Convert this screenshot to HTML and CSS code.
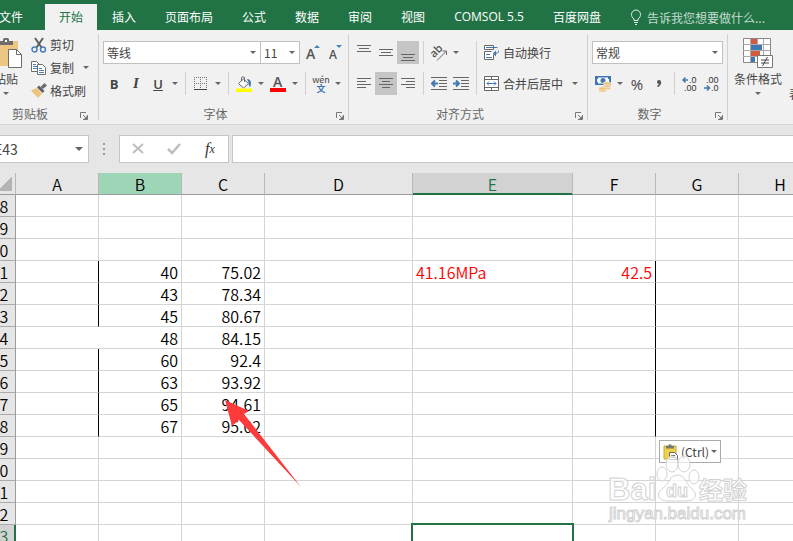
FILE: index.html
```html
<!DOCTYPE html>
<html lang="zh-CN">
<head>
    <meta charset="UTF-8">
    <meta name="viewport" content="width=device-width, initial-scale=1.0">
    <title>Excel</title>
    <link rel="stylesheet" href="styles.css">
</head>
<body>
    <div class="app">
        <!-- Ribbon tabs -->
        <nav class="tabs">
            <button class="tab file">文件</button>
            <button class="tab active">开始</button>
            <button class="tab">插入</button>
            <button class="tab">页面布局</button>
            <button class="tab">公式</button>
            <button class="tab">数据</button>
            <button class="tab">审阅</button>
            <button class="tab">视图</button>
            <button class="tab latin">COMSOL 5.5</button>
            <button class="tab">百度网盘</button>
            <label class="tell-me">
                <svg width="12" height="16" viewBox="0 0 12 16" fill="none" stroke="#e3efe8"><path d="M4 11.500V10C2 8.500 1.500 7 1.500 5.500a4.500 4.500 0 0 1 9 0C10.500 7 10 8.500 8 10v1.500zM4 13.500h4M5 15.500h2"/></svg>
                <input type="text" placeholder="告诉我您想要做什么..." aria-label="告诉我您想要做什么">
            </label>
        </nav>

        <div class="ribbon">
            <!-- Clipboard -->
            <section class="group first">
                <div class="group-body clipboard">
                    <button class="big-btn paste">
                        <svg width="32" height="32" viewBox="0 0 32 32"><path d="M2 3h26v25H2z" fill="#edc683"/><path d="M9 7V3h4V1.500q0-1.500 1.500-1.500h3Q19 0 19 1.500V3h4v4z" fill="#6d6d6d"/><path d="M15 2h2v2h-2z" fill="#fff"/><path d="M18.500 11.500h8l5 5v13h-13z" fill="#fff" stroke="#6d6d6d"/><path d="M26.500 11.500v5h5" fill="none" stroke="#6d6d6d"/></svg>
                        <span>粘贴</span>
                        <i class="arrow"></i>
                    </button>
                    <div class="stack">
                        <button class="text-btn">
                            <svg width="16" height="16" viewBox="0 0 16 16" fill="none"><path d="M4 1l6.500 9.500M12 1L5.500 10.500" stroke="#5f5f5f" stroke-width="2"/><circle cx="3.500" cy="12.500" r="2.500" stroke="#4a7fb8" stroke-width="1.400"/><circle cx="12" cy="12.500" r="2.500" stroke="#4a7fb8" stroke-width="1.400"/></svg>
                            剪切
                        </button>
                        <button class="text-btn">
                            <svg width="16" height="16" viewBox="0 0 16 16" fill="#fff" stroke="#6d6d6d"><path d="M.5 1.500h5l3 3v7h-8z"/><path d="M2 4.500h3M2 6.500h4M2 8.500h4" stroke="#4a7fb8"/><path d="M6.500 4.500h5l3 3v7h-8z"/><path d="M8 8.500h3M8 10.500h5M8 12.500h5" stroke="#4a7fb8"/></svg>
                            复制 <i class="arrow"></i>
                        </button>
                        <button class="text-btn">
                            <svg width="16" height="16" viewBox="0 0 16 16"><path d="M13.500 0L16 2.500 12 6 9.500 4z" fill="#6d6d6d"/><path d="M8 2.500L13.500 8l-2 2L6 4.500z" fill="#5f5f5f"/><path d="M5.500 5l5.500 5.500L7 15 0 7.500z" fill="#edc27b"/></svg>
                            格式刷
                        </button>
                    </div>
                </div>
                <div class="group-label"><span>剪贴板</span><button class="launcher" aria-label="剪贴板设置"><svg width="8" height="8" viewBox="0 0 8 8"><path d="M.5 6V.500H6" fill="none" stroke="#777"/><path d="M3 3l3 3M7.500 3v4.500H3" fill="none" stroke="#777"/><path d="M4 7l3-3v3z" fill="#777"/></svg></button></div>
            </section>

            <!-- Font -->
            <section class="group">
                <div class="group-body font">
                    <div class="row">
                        <div class="select font-name"><select aria-label="字体"><option>等线</option></select></div>
                        <div class="select font-size"><select aria-label="字号"><option>11</option></select></div>
                        <button class="icon-btn grow-font" aria-label="增大字号"><svg width="16" height="18" viewBox="0 0 16 18"><text x="1" y="15" font-size="14" class="glyph">A</text><path d="M9 4l3-3 3 3z" fill="#4a7fb8"/></svg></button>
                        <button class="icon-btn" aria-label="减小字号"><svg width="16" height="18" viewBox="0 0 16 18"><text x="2" y="15" font-size="12" class="glyph">A</text><path d="M9 1h6l-3 3z" fill="#4a7fb8"/></svg></button>
                    </div>
                    <div class="row">
                        <button class="icon-btn bold">B</button>
                        <button class="icon-btn italic">I</button>
                        <button class="icon-btn underline">U</button>
                        <button class="drop" aria-label="下划线"><i class="arrow"></i></button>
                        <span class="sep"></span>
                        <button class="icon-btn" aria-label="边框"><svg width="14" height="14" viewBox="0 0 14 14" fill="none" stroke="#777"><path d="M0 .5h13M0 6.500h13M.5 0v12M6.500 0v12M12.500 0v12" stroke-dasharray="1 1"/><path d="M0 12.500h13" stroke="#444"/></svg></button>
                        <button class="drop" aria-label="边框选项"><i class="arrow"></i></button>
                        <span class="sep"></span>
                        <button class="icon-btn" aria-label="填充颜色"><svg width="16" height="16" viewBox="0 0 16 16"><path d="M2.500 7.500l5-4.500 5 4.500-5 4.500z" fill="#fff" stroke="#666"/><path d="M5.500 5V1.500Q7 0 8.500 1.500V6" fill="none" stroke="#666"/><path d="M11 3q4 0 4 4.500 0 3-1.500 3.500-1-3-1-4.500z" fill="#3f77b4"/><path d="M0 12.500h16V16H0z" fill="#ff0"/></svg></button>
                        <button class="drop" aria-label="填充颜色选项"><i class="arrow"></i></button>
                        <button class="icon-btn" aria-label="字体颜色"><svg width="16" height="16" viewBox="0 0 16 16"><text x="3" y="11" font-size="14" class="glyph">A</text><path d="M0 12h16v4H0z" fill="#f00"/></svg></button>
                        <button class="drop" aria-label="字体颜色选项"><i class="arrow"></i></button>
                        <span class="sep"></span>
                        <button class="icon-btn pinyin"><span>wén</span><b>文</b></button>
                        <button class="drop" aria-label="拼音选项"><i class="arrow"></i></button>
                    </div>
                </div>
                <div class="group-label"><span>字体</span><button class="launcher" aria-label="字体设置"><svg width="8" height="8" viewBox="0 0 8 8"><path d="M.5 6V.500H6" fill="none" stroke="#777"/><path d="M3 3l3 3M7.500 3v4.500H3" fill="none" stroke="#777"/><path d="M4 7l3-3v3z" fill="#777"/></svg></button></div>
            </section>

            <!-- Alignment -->
            <section class="group">
                <div class="group-body columns">
                    <div class="lines">
                        <div class="row">
                            <button class="icon-btn" aria-label="顶端对齐"><svg width="14" height="16" viewBox="0 0 14 16" stroke="#666"><path d="M0 .5h14M2 3.500h10M0 6.500h14"/></svg></button>
                            <button class="icon-btn" aria-label="垂直居中"><svg width="14" height="16" viewBox="0 0 14 16" stroke="#666"><path d="M0 4.500h14M2 7.500h10M0 10.500h14"/></svg></button>
                            <button class="icon-btn on" aria-label="底端对齐"><svg width="14" height="16" viewBox="0 0 14 16" stroke="#666"><path d="M0 9.500h14M2 12.500h10M0 15.500h14"/></svg></button>
                            <span class="sep"></span>
                            <button class="icon-btn" aria-label="方向"><svg width="18" height="18" viewBox="0 0 18 18"><text x="0" y="11" font-size="11" class="glyph" transform="rotate(-45 6 8)">ab</text><path d="M7 16.500l9-9M16.500 11V7h-4" fill="none" stroke="#666"/></svg></button>
                            <button class="drop" aria-label="方向选项"><i class="arrow"></i></button>
                        </div>
                        <div class="row">
                            <button class="icon-btn" aria-label="左对齐"><svg width="14" height="14" viewBox="0 0 14 14" stroke="#666"><path d="M0 1.500h14M0 4.500h9M0 7.500h14M0 10.500h9"/></svg></button>
                            <button class="icon-btn on" aria-label="居中"><svg width="14" height="14" viewBox="0 0 14 14" stroke="#666"><path d="M0 1.500h14M3 4.500h8M0 7.500h14M3 10.500h8"/></svg></button>
                            <button class="icon-btn" aria-label="右对齐"><svg width="14" height="14" viewBox="0 0 14 14" stroke="#666"><path d="M0 1.500h14M5 4.500h9M0 7.500h14M5 10.500h9"/></svg></button>
                            <span class="sep"></span>
                            <button class="icon-btn" aria-label="减少缩进"><svg width="16" height="14" viewBox="0 0 16 14" fill="none" stroke="#666"><path d="M0 .5h16M8 3.500h8M8 6.500h8M8 9.500h8M0 12.500h16"/><path d="M7 6.500H1M4 3.500l-3 3 3 3" stroke="#3f77b4" stroke-width="2"/></svg></button>
                            <button class="icon-btn" aria-label="增加缩进"><svg width="16" height="14" viewBox="0 0 16 14" fill="none" stroke="#666"><path d="M0 .5h16M8 3.500h8M8 6.500h8M8 9.500h8M0 12.500h16"/><path d="M0 6.500h6M3 3.500l3 3-3 3" stroke="#3f77b4" stroke-width="2"/></svg></button>
                        </div>
                    </div>
                    <span class="sep tall"></span>
                    <div class="lines">
                        <button class="text-btn"><svg width="16" height="16" viewBox="0 0 16 16" fill="none" stroke="#666"><path d="M.5 .5h9v4h-9zM9.500 9.500v5h-9v-8h7" fill="#fff"/><path d="M2 2.500h11.500M2 9.500h4M2 12.500h6M14.500 5.500v1q0 2-3.500 2" stroke="#3f77b4"/><path d="M12 5.500L9 8.500l3 3z" fill="#3f77b4" stroke="none"/></svg>自动换行</button>
                        <button class="text-btn"><svg width="16" height="16" viewBox="0 0 16 16" fill="#fff" stroke="#666"><path d="M.5 .5h14v14H.5zM.5 3.500h14M.5 11.500h14M7.500 .5v3M7.500 11.500v3"/><path d="M3 7.500h9M5 5.500l-2 2 2 2M10 5.500l2 2-2 2" fill="none" stroke="#3f77b4"/></svg>合并后居中 <i class="arrow"></i></button>
                    </div>
                </div>
                <div class="group-label"><span>对齐方式</span><button class="launcher" aria-label="对齐设置"><svg width="8" height="8" viewBox="0 0 8 8"><path d="M.5 6V.500H6" fill="none" stroke="#777"/><path d="M3 3l3 3M7.500 3v4.500H3" fill="none" stroke="#777"/><path d="M4 7l3-3v3z" fill="#777"/></svg></button></div>
            </section>

            <!-- Number -->
            <section class="group">
                <div class="group-body">
                    <div class="row">
                        <div class="select number-format"><select aria-label="数字格式"><option>常规</option></select></div>
                    </div>
                    <div class="row">
                        <button class="icon-btn" aria-label="会计数字格式"><svg width="16" height="16" viewBox="0 0 16 16"><path d="M0 0h16v9H0z" fill="#3f77b4"/><path d="M2 1.500h12v6H2z" fill="#fff"/><circle cx="8" cy="4.500" r="2.500" fill="#3f77b4"/><path d="M1 1h2v2H1zM13 1h2v2h-2zM1 6h2v2H1z" fill="#3f77b4"/><g fill="#edc27b" stroke="#f1f1f1" stroke-width=".7"><ellipse cx="12" cy="12" rx="4" ry="1.700"/><ellipse cx="12" cy="10" rx="4" ry="1.700"/><ellipse cx="12" cy="7.500" rx="4" ry="1.700"/><ellipse cx="7.500" cy="14.500" rx="4" ry="1.700"/><ellipse cx="7.500" cy="12.500" rx="4" ry="1.700"/></g></svg></button>
                        <button class="drop" aria-label="货币选项"><i class="arrow"></i></button>
                        <button class="icon-btn percent">%</button>
                        <button class="icon-btn" aria-label="千位分隔样式"><svg width="8" height="14" viewBox="0 0 8 14"><circle cx="4" cy="5" r="2" fill="#555"/><path d="M5.500 5q0 3-3 4.500" fill="none" stroke="#555" stroke-width="1.500"/></svg></button>
                        <span class="sep"></span>
                        <button class="icon-btn" aria-label="增加小数位数"><svg width="16" height="16" viewBox="0 0 16 16"><text x="7" y="7" font-size="9" class="digits">.0</text><text x="2" y="15" font-size="9" class="digits">.00</text><path d="M6 4H1M3.500 1.500L1 4l2.500 2.500" fill="none" stroke="#3f77b4" stroke-width="1.500"/></svg></button>
                        <button class="icon-btn" aria-label="减少小数位数"><svg width="16" height="16" viewBox="0 0 16 16"><text x="2" y="7" font-size="9" class="digits">.00</text><text x="7" y="15" font-size="9" class="digits">.0</text><path d="M0 12h5M3 9.500L5.500 12 3 14.500" fill="none" stroke="#3f77b4" stroke-width="1.500"/></svg></button>
                    </div>
                </div>
                <div class="group-label"><span>数字</span><button class="launcher" aria-label="数字设置"><svg width="8" height="8" viewBox="0 0 8 8"><path d="M.5 6V.500H6" fill="none" stroke="#777"/><path d="M3 3l3 3M7.500 3v4.500H3" fill="none" stroke="#777"/><path d="M4 7l3-3v3z" fill="#777"/></svg></button></div>
            </section>

            <!-- Styles -->
            <section class="group styles">
                <div class="group-body clipboard">
                    <button class="big-btn">
                        <svg width="32" height="32" viewBox="0 0 32 32"><path d="M1.500 .5h27v24h-27z" fill="#fff" stroke="#888"/><path d="M1 6.500h27M1 12.500h27M1 18.500h27M8.500 1v23M15.500 1v23M21.500 1v23" stroke="#aaa"/><path d="M9 1h6v5H9zM9 13h9v5H9z" fill="#d65b3b"/><path d="M9 7h11v5H9zM9 19h4v5H9z" fill="#3f77b4"/><path d="M15.500 17.500h15v12h-15z" fill="#fff" stroke="#777"/><path d="M19 22h8M19 25h8M25.500 19l-5 9" stroke="#444"/></svg>
                        <span>条件格式</span>
                        <i class="arrow"></i>
                    </button>
                    <button class="big-btn">
                        <svg width="24" height="32" viewBox="0 0 24 32"><path d="M1.500 .5h22v24h-22z" fill="#fff" stroke="#888"/></svg>
                        <span>套用<br>表格格式</span>
                    </button>
                </div>
            </section>
        </div>

        <!-- Formula bar -->
        <div class="formula-bar">
            <div class="name-box"><input type="text" value="E43" aria-label="名称框"><i class="arrow"></i></div>
            <svg class="dots" width="2" height="12" viewBox="0 0 2 12" fill="#999"><path d="M0 0h2v2H0zM0 5h2v2H0zM0 10h2v2H0z"/></svg>
            <div class="fx-box">
                <button aria-label="取消"><svg width="12" height="12" viewBox="0 0 12 12" stroke="#bdbdbd" stroke-width="2"><path d="M1 1l10 9M11 1L1 10"/></svg></button>
                <button aria-label="输入"><svg width="14" height="12" viewBox="0 0 14 12" fill="none" stroke="#bdbdbd" stroke-width="2.500"><path d="M1 6l4 4 8-9"/></svg></button>
                <button class="fx" aria-label="插入函数">f<sub>x</sub></button>
            </div>
            <input type="text" class="formula-input" aria-label="编辑栏">
        </div>

        <!-- Worksheet -->
        <div class="sheet">
            <table>
                <colgroup>
                    <col class="col-head"><col class="col"><col class="col"><col class="col"><col class="col-d"><col class="col-e"><col class="col"><col class="col"><col class="col">
                </colgroup>
                <thead>
                    <tr><th class="corner"></th><th>A</th><th class="marked">B</th><th>C</th><th>D</th><th class="current">E</th><th>F</th><th>G</th><th>H</th></tr>
                </thead>
                <tbody>
                    <tr><th>28</th><td></td><td></td><td></td><td></td><td></td><td></td><td></td><td></td></tr>
                    <tr><th>29</th><td></td><td></td><td></td><td></td><td></td><td></td><td></td><td></td></tr>
                    <tr><th>30</th><td></td><td></td><td></td><td></td><td></td><td></td><td></td><td></td></tr>
                    <tr><th>31</th><td class="edge"></td><td>40</td><td>75.02</td><td></td><td class="red left">41.16MPa</td><td class="red edge">42.5</td><td></td><td></td></tr>
                    <tr><th>32</th><td class="edge"></td><td>43</td><td>78.34</td><td></td><td></td><td class="edge"></td><td></td><td></td></tr>
                    <tr><th>33</th><td class="edge"></td><td>45</td><td>80.67</td><td></td><td></td><td class="edge"></td><td></td><td></td></tr>
                    <tr><th>34</th><td class="no-edge"></td><td>48</td><td>84.15</td><td></td><td></td><td class="edge"></td><td></td><td></td></tr>
                    <tr><th>35</th><td class="edge"></td><td>60</td><td>92.4</td><td></td><td></td><td class="edge"></td><td></td><td></td></tr>
                    <tr><th>36</th><td class="edge"></td><td>63</td><td>93.92</td><td></td><td></td><td class="edge"></td><td></td><td></td></tr>
                    <tr><th>37</th><td class="edge"></td><td>65</td><td>94.61</td><td></td><td></td><td class="edge"></td><td></td><td></td></tr>
                    <tr><th>38</th><td class="edge"></td><td>67</td><td>95.02</td><td></td><td></td><td class="edge"></td><td></td><td></td></tr>
                    <tr><th>39</th><td></td><td></td><td></td><td></td><td></td><td></td><td></td><td></td></tr>
                    <tr><th>40</th><td></td><td></td><td></td><td></td><td></td><td></td><td></td><td></td></tr>
                    <tr><th>41</th><td></td><td></td><td></td><td></td><td></td><td></td><td></td><td></td></tr>
                    <tr><th>42</th><td></td><td></td><td></td><td></td><td></td><td></td><td></td><td></td></tr>
                    <tr><th class="current">43</th><td></td><td></td><td></td><td></td><td class="selected"></td><td></td><td></td><td></td></tr>
                </tbody>
            </table>

            <svg class="pointer" width="78" height="88" viewBox="0 0 78 88"><path d="M0 0l24 11-5 3 57 73L14 20l-7 6z" fill="#fc3b3a"/></svg>

            <button class="paste-options">
                <svg width="16" height="16" viewBox="0 0 16 16"><path d="M1 2h12v13H1z" fill="#f0d24a" stroke="#c9a832"/><path d="M3 4.500V2h2.500V.5h3V2H11v2.500z" fill="#777"/><path d="M6.500 8.500h5l3 3v4h-8z" fill="#fff" stroke="#666"/><path d="M8 11.500h4M8 13.500h5" stroke="#666"/></svg>
                <span>(Ctrl)</span>
                <i class="arrow"></i>
            </button>

            <svg class="watermark" width="144" height="72" viewBox="0 0 144 72">
                <g fill="#fff" fill-opacity=".7" stroke="#d2d2d2">
                    <ellipse cx="64" cy="10" rx="6" ry="8"/>
                    <ellipse cx="76" cy="10" rx="6" ry="8"/>
                    <ellipse cx="54" cy="20" rx="5" ry="7"/>
                    <ellipse cx="86" cy="23" rx="5" ry="7"/>
                    <path d="M69 21q6 0 9 6t7 9q4 4 2 7-2 4-9 4H60q-7 0-9-4-2-4 3-8t7-8q3-6 8-6z"/>
                    <text x="0" y="46" class="mark-latin">Bai</text>
                    <text x="58" y="43" class="mark-du">du</text>
                    <text x="91" y="45" class="mark-cjk">经验</text>
                    <text x="1" y="65" class="mark-url">jingyan.baidu.com</text>
                </g>
            </svg>
        </div>
    </div>
</body>
</html>
```

FILE: styles.css
```css
* {
    box-sizing: border-box;
}
body {
    margin: 0;
    height: 100vh;
    overflow: hidden;
    font-family: "Noto Sans CJK SC", sans-serif;
    font-size: 12px;
    color: #444;
    background-color: #e6e6e6;
}
button, input, select {
    font: inherit;
    color: inherit;
    background: none;
    border: none;
    border-radius: 0;
    padding: 0;
    margin: 0;
    outline: none;
}
button {
    white-space: nowrap;
}
svg {
    display: block;
    flex: none;
}
.app {
    display: flex;
    flex-direction: column;
    height: 100%;
    margin-left: -16px;
}
.arrow {
    flex: none;
    width: 0;
    height: 0;
    border: 3px solid transparent;
    border-top-color: #666;
    border-bottom: none;
}

/* Tabs */
.tabs {
    display: flex;
    align-items: flex-end;
    height: 30px;
    flex: none;
    background-color: #217346;
    color: #fff;
}
.tab {
    height: 26px;
    padding: 0 14px 2px;
    margin-right: 1px;
}
.tab.file {
    padding: 0 21px 2px 15px;
}
.tab.active {
    background-color: #f1f1f1;
    color: #217346;
}
.tab.latin {
    font-family: "Open Sans", sans-serif;
}
.tell-me {
    display: flex;
    align-items: center;
    gap: 5px;
    height: 26px;
    margin-left: 14px;
    flex: 1;
}
.tell-me input {
    flex: 1;
    min-width: 0;
}
.tell-me input::placeholder {
    color: #c5dccf;
    opacity: 1;
}

/* Ribbon */
.ribbon {
    display: flex;
    flex: none;
    height: 95px;
    background-color: #f1f1f1;
    border-bottom: 1px solid #d5d5d5;
    overflow: hidden;
}
.group {
    position: relative;
    flex: none;
    padding-right: 1px;
}
.group.first {
    padding-right: 7px;
}
.group::after {
    content: "";
    position: absolute;
    top: 4px;
    bottom: 4px;
    right: 0;
    width: 1px;
    background-color: #d0d0d0;
}
.group.styles::after {
    display: none;
}
.group-body {
    height: 73px;
    padding: 11px 4px 0;
}
.group-body.font {
    padding-right: 2px;
}
.group-body.columns {
    display: flex;
    padding-right: 6px;
}
.group-body.clipboard {
    display: flex;
    padding: 3px 0 0;
}
.row {
    display: flex;
    height: 23px;
}
.row + .row, .lines .text-btn + .text-btn {
    margin-top: 8px;
}
.group-label {
    display: flex;
    align-items: center;
    height: 20px;
    color: #666;
}
.group-label span {
    flex: 1;
    text-align: center;
}
.launcher {
    width: 16px;
    padding: 6px 4px 0;
}
.icon-btn {
    display: flex;
    align-items: center;
    justify-content: center;
    width: 22px;
    height: 23px;
    flex: none;
}
.icon-btn.on {
    background-color: #c5c5c5;
}
.drop {
    display: flex;
    align-items: center;
    justify-content: center;
    width: 12px;
}
.sep {
    width: 1px;
    margin: 0 4px;
    background-color: #d0d0d0;
}
.sep.tall {
    height: 54px;
}
.text-btn {
    display: flex;
    align-items: center;
    gap: 3px;
    height: 23px;
    padding: 0 3px;
}
.text-btn .arrow {
    margin-left: 6px;
}
.big-btn {
    display: flex;
    flex-direction: column;
    align-items: center;
    padding: 5px 2px 0;
    line-height: 15px;
}
.big-btn span {
    margin-top: 1px;
}
.big-btn .arrow {
    margin-top: 6px;
}
.big-btn.paste {
    width: 44px;
}
.group.styles .big-btn {
    margin-left: 4px;
    padding: 5px 1px 0 2px;
}
.select {
    position: relative;
    border: 1px solid #c0c0c0;
    background-color: #fff;
}
.select::after {
    content: "";
    position: absolute;
    right: 4px;
    top: 9px;
    border: 3px solid transparent;
    border-top-color: #666;
    border-bottom: none;
    pointer-events: none;
}
.select select {
    appearance: none;
    width: 100%;
    height: 100%;
    padding-left: 3px;
}
.font-name {
    width: 158px;
}
.font-size {
    width: 40px;
    margin-left: -1px;
}
.grow-font {
    margin-left: 2px;
}
.number-format {
    width: 131px;
}
.glyph {
    font-family: "Open Sans", sans-serif;
    font-weight: 600;
    fill: #555;
}
.digits {
    font-family: "Liberation Sans", sans-serif;
    fill: #333;
}
.bold, .italic, .underline {
    font-family: "Open Sans", sans-serif;
    font-size: 13px;
    font-weight: bold;
}
.italic {
    font-family: "Liberation Serif", serif;
    font-size: 15px;
    font-style: italic;
}
.underline {
    font-weight: 600;
    text-decoration: underline;
}
.percent {
    font-family: "Open Sans", sans-serif;
    font-size: 15px;
}
.pinyin {
    flex-direction: column;
    font-size: 9px;
    line-height: 9px;
}
.pinyin b {
    color: #3f77b4;
}

/* Formula bar */
.formula-bar {
    display: flex;
    align-items: center;
    flex: none;
    height: 48px;
}
.name-box, .fx-box, .formula-input {
    height: 28px;
    background-color: #fff;
    border: 1px solid #c6c6c6;
}
.name-box {
    display: flex;
    align-items: center;
    width: 105px;
    padding: 0 5px 0 9px;
}
.name-box input {
    flex: 1;
    min-width: 0;
    font-size: 14px;
}
.name-box .arrow {
    border-width: 4px 4px 0;
}
.dots {
    margin: 0 14px;
}
.fx-box {
    display: flex;
    width: 110px;
}
.fx-box button {
    display: flex;
    align-items: center;
    justify-content: center;
    flex: 1;
}
.fx-box .fx {
    font-family: "Liberation Serif", serif;
    font-size: 16px;
    font-style: italic;
    color: #333;
}
.fx sub {
    font-size: 12px;
}
.formula-input {
    flex: 1;
    margin-left: 3px;
    border-right: none;
}

/* Worksheet */
.sheet {
    position: relative;
    flex: 1;
    min-height: 0;
    overflow: hidden;
    background-color: #fff;
}
table {
    table-layout: fixed;
    width: 0;
    border-spacing: 0;
    font-size: 16px;
    line-height: 19px;
    color: #000;
}
.col-head {
    width: 32px;
}
.col {
    width: 83px;
}
.col-d {
    width: 148px;
}
.col-e {
    width: 160px;
}
th, td {
    height: 22px;
    padding: 2px 0 0;
    border-right: 1px solid #d4d4d4;
    border-bottom: 1px solid #d4d4d4;
    white-space: nowrap;
    font-weight: 350;
}
th {
    background-color: #e6e6e6;
    border-right-color: #ababab;
    border-bottom-color: #ababab;
}
thead th {
    border-right-color: #b8b8b8;
    border-bottom-color: #9b9b9b;
}
tbody th {
    border-right-color: #9b9b9b;
}
td {
    text-align: right;
    padding: 2px 3px 0;
}
.corner {
    background-image: linear-gradient(135deg, transparent 50%, #b4b4b4 50%);
    background-size: 14px 14px;
    background-position: 14px 4px;
    background-repeat: no-repeat;
}
.marked {
    background-color: #9fd5b7;
}
.current {
    background-color: #d2d2d2;
    color: #217346;
}
thead .current {
    box-shadow: inset 0 -1px #217346;
    border-bottom-color: #217346;
}
tbody .current {
    box-shadow: inset -1px 0 #217346;
    border-right-color: #217346;
}
.left {
    text-align: left;
}
.red {
    color: #f00;
}
.edge {
    border-right-color: #000;
}
.no-edge {
    border-right-color: #fff;
}
.selected {
    position: relative;
}
.selected::after {
    content: "";
    position: absolute;
    inset: -2px;
    border: 2px solid #217346;
}
.pointer {
    position: absolute;
    left: 241px;
    top: 227px;
}
.paste-options {
    position: absolute;
    left: 675px;
    top: 267px;
    display: flex;
    align-items: center;
    gap: 2px;
    height: 23px;
    padding: 0 3px;
    background-color: #fff;
    border: 1px solid #ababab;
}
.watermark {
    position: absolute;
    left: 624px;
    top: 281px;
}
.mark-latin, .mark-du, .mark-url {
    font-family: "Liberation Sans", sans-serif;
}
.mark-latin {
    font-size: 31px;
    font-weight: bold;
}
.mark-du {
    font-size: 18px;
    font-weight: bold;
}
.mark-cjk {
    font-size: 24px;
    font-weight: bold;
}
.mark-url {
    font-size: 17px;
}
```
